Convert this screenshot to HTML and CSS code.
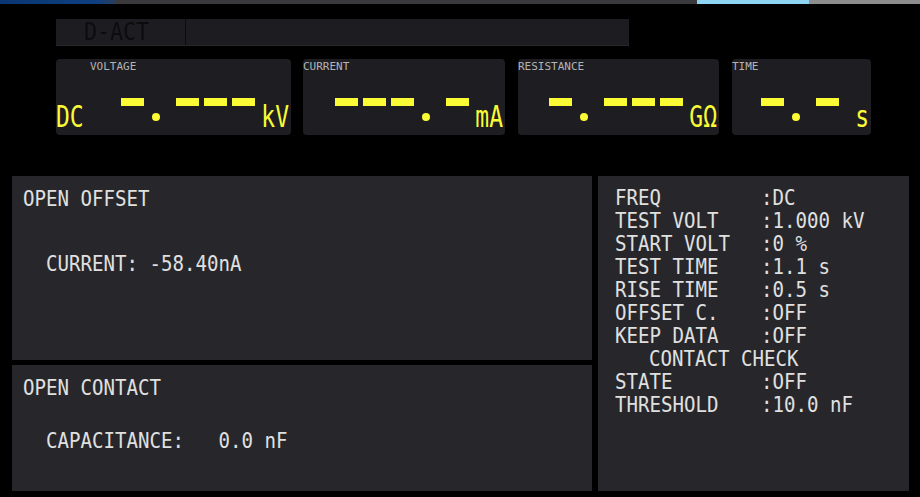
FILE: index.html
```html
<!DOCTYPE html>
<html lang="en">
<head>
<meta charset="utf-8">
<title>D-ACT</title>
<link rel="stylesheet" href="styles.css">
</head>
<body>
<div class="screen">
  <div class="topbar">
    <span class="tb tb-blue"></span>
    <span class="tb tb-dark"></span>
    <span class="tb tb-sky"></span>
    <span class="tb tb-gray"></span>
  </div>

  <div class="tabbar">
    <div class="tab tab-name"><span class="tall">D-ACT</span></div>
    <div class="tab tab-rest"></div>
  </div>

  <div class="meters">
    <div class="meter meter-voltage">
      <div class="meter-label label-indent">VOLTAGE</div>
      <div class="meter-row">
        <span class="unit">DC</span>
        <span class="seg lead-v"></span>
        <span class="dp"></span>
        <span class="seg"></span><span class="seg"></span><span class="seg"></span>
        <span class="unit unit-right">kV</span>
      </div>
    </div>
    <div class="meter meter-current">
      <div class="meter-label">CURRENT</div>
      <div class="meter-row">
        <span class="seg lead-c"></span><span class="seg"></span><span class="seg"></span>
        <span class="dp"></span>
        <span class="seg"></span>
        <span class="unit unit-right">mA</span>
      </div>
    </div>
    <div class="meter meter-resistance">
      <div class="meter-label">RESISTANCE</div>
      <div class="meter-row">
        <span class="seg lead-r"></span>
        <span class="dp"></span>
        <span class="seg"></span><span class="seg"></span><span class="seg"></span>
        <span class="unit unit-right">GΩ</span>
      </div>
    </div>
    <div class="meter meter-time">
      <div class="meter-label">TIME</div>
      <div class="meter-row">
        <span class="seg lead-t"></span>
        <span class="dp"></span>
        <span class="seg"></span>
        <span class="unit unit-right">s</span>
      </div>
    </div>
  </div>

  <div class="main">
    <div class="left">
      <section class="panel panel-offset">
        <div class="txt tall">OPEN OFFSET</div>
        <div class="txt tall indent offset-value">CURRENT: -58.40nA</div>
      </section>
      <section class="panel panel-contact">
        <div class="txt tall">OPEN CONTACT</div>
        <div class="txt tall indent contact-value">CAPACITANCE:   0.0 nF</div>
      </section>
    </div>
    <section class="panel settings">
      <div class="settings-list tall">
        <span>FREQ</span><span>:DC</span>
        <span>TEST VOLT</span><span>:1.000 kV</span>
        <span>START VOLT</span><span>:0 %</span>
        <span>TEST TIME</span><span>:1.1 s</span>
        <span>RISE TIME</span><span>:0.5 s</span>
        <span>OFFSET C.</span><span>:OFF</span>
        <span>KEEP DATA</span><span>:OFF</span>
        <span class="group-title">CONTACT CHECK</span>
        <span>STATE</span><span>:OFF</span>
        <span>THRESHOLD</span><span>:10.0 nF</span>
      </div>
    </section>
  </div>
</div>
</body>
</html>
```
FILE: styles.css
```css
* { box-sizing: border-box; }

html, body {
  margin: 0;
  padding: 0;
  background: #000;
}

body {
  width: 920px;
  height: 497px;
  overflow: hidden;
  font-family: "DejaVu Sans Mono", "Liberation Mono", monospace;
  color: #e0e0e0;
}

.screen {
  width: 920px;
  height: 497px;
  display: flex;
  flex-direction: column;
}

/* top status strip */
.topbar {
  display: flex;
  height: 4px;
}
.tb { display: block; height: 4px; }
.tb-blue { width: 115px; background: linear-gradient(90deg, #0a3673 0%, #0e3f80 85%, #2a3f5c 100%); }
.tb-dark { width: 582px; background: #3a3a3c; }
.tb-sky { width: 112px; background: #8ed4f3; }
.tb-gray { flex: 1; background: #8d8d8d; }

/* tab header */
.tabbar {
  display: flex;
  margin: 15px 0 0 56px;
  width: 573px;
  height: 27px;
  background: #1d1d21;
  border-bottom: 1px solid #28282c;
}
.tab-name {
  width: 130px;
  border-right: 1px solid #0c0c0e;
  padding-left: 28px;
  font-size: 21.6px;
  line-height: 22px;
  color: #0c0c0e;
}
.tab-rest { flex: 1; }

.tall {
  display: block;
  transform: scaleY(1.15);
  transform-origin: 0 0;
}

/* meters */
.meters {
  display: flex;
  margin: 13px 0 0 56px;
  height: 76px;
}
.meter {
  height: 76px;
  background: #1e1e22;
  border-radius: 4px;
  display: flex;
  flex-direction: column;
  flex-shrink: 0;
}
.meter-voltage { width: 235px; }
.meter-current { width: 202px; margin-left: 12px; }
.meter-resistance { width: 201px; margin-left: 13px; }
.meter-time { width: 139px; margin-left: 13px; }

.meter-label {
  margin-top: 2px;
  font-size: 11px;
  line-height: 11px;
  height: 11px;
  color: #b4b4b4;
}
.label-indent { padding-left: 34px; }

.meter-row {
  display: flex;
  align-items: flex-start;
  height: 29px;
  margin-top: 26px;
  padding-right: 2px;
}

.seg {
  flex-shrink: 0;
  width: 23px;
  height: 8px;
  margin-right: 5px;
  background: #fbfb35;
}
.lead-v { margin-left: 37px; }
.lead-c { margin-left: 32px; }
.lead-r { margin-left: 31px; }
.lead-t { margin-left: 29px; }

.dp {
  flex-shrink: 0;
  width: 8px;
  height: 8px;
  margin: 15px 16px 0 3px;
  border-radius: 50%;
  background: #fbfb35;
}

.unit {
  flex-shrink: 0;
  height: 29px;
  font-size: 23px;
  line-height: 42px;
  color: #fbfb35;
  transform: scaleY(1.31);
  transform-origin: 50% 29px;
}
.unit-right { margin-left: auto; }

/* main panels */
.main {
  display: flex;
  margin: 41px 0 0 12px;
  height: 315px;
}
.left {
  width: 580px;
  display: flex;
  flex-direction: column;
  gap: 5px;
}
.panel {
  background: #27272b;
}
.panel-offset {
  height: 184px;
  padding: 9px 11px;
}
.panel-contact {
  height: 126px;
  padding: 9px 11px;
}
.txt {
  font-size: 19.1px;
  line-height: 23px;
  white-space: pre;
}
.indent { padding-left: 23px; }
.offset-value { margin-top: 42px; }
.contact-value { margin-top: 30px; }

.settings {
  width: 311px;
  margin-left: 6px;
  height: 315px;
  padding: 11px 17px;
}
.settings-list {
  display: grid;
  grid-template-columns: 146px auto;
  font-size: 19.1px;
  line-height: 20px;
  white-space: pre;
}
.group-title {
  grid-column: 1 / -1;
  padding-left: 34px;
}
```
